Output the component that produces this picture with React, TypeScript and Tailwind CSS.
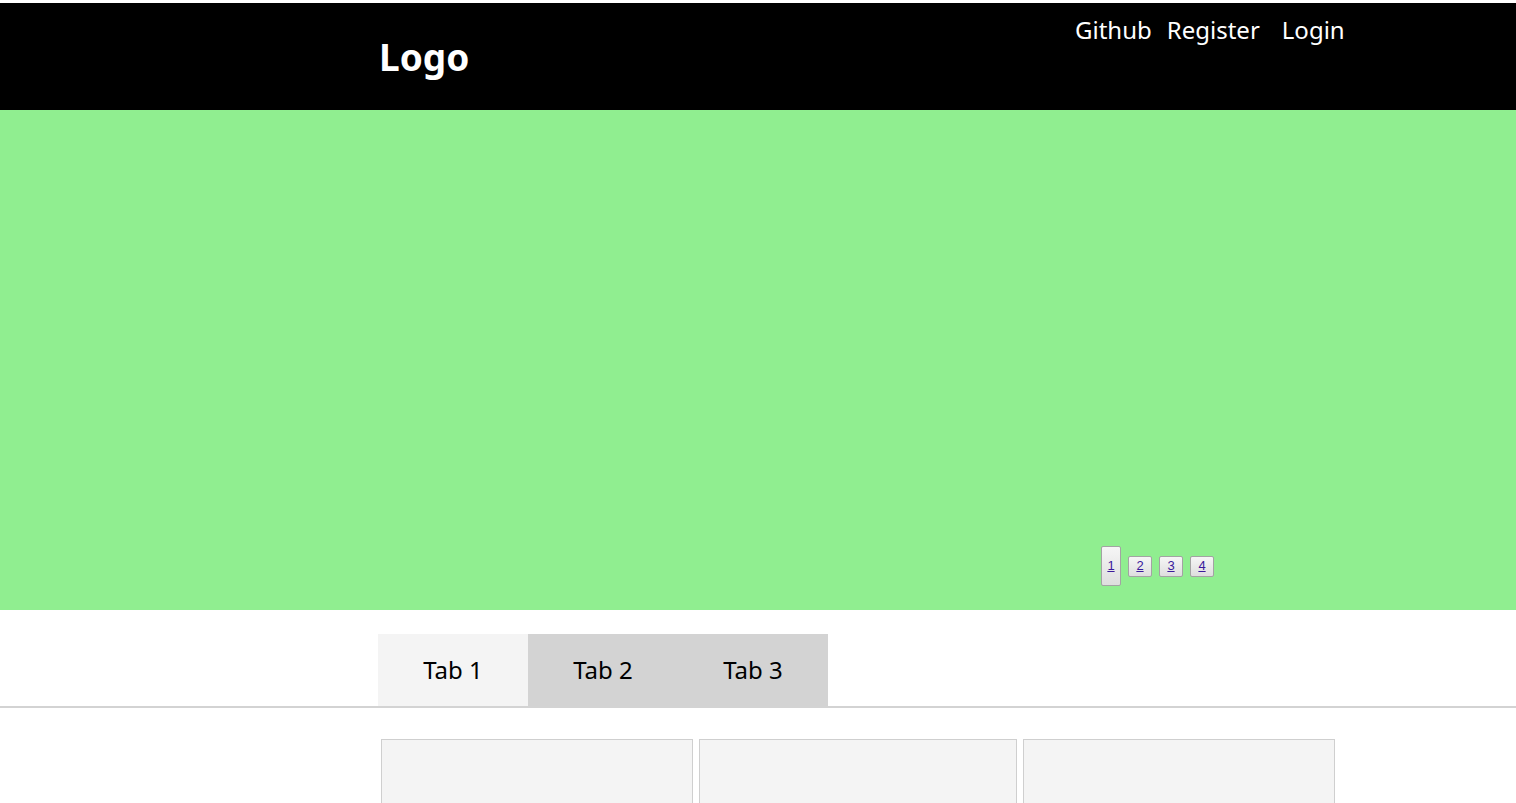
import React from 'react';

// TYPES
type Link = { title: string; href: string };

const NAV: Link[] = [
  { title: 'Github', href: '#' },
  { title: 'Register', href: '#' },
  { title: 'Login', href: '#' },
];

const TABS = ['Tab 1', 'Tab 2', 'Tab 3'];

// MARKUP
const Header = () => (
  <header className="mt-[3px] h-[107px] bg-black text-white">
    <div className="relative h-full">
      <h1 className="absolute left-[379px] top-[32px] text-[37px] font-bold leading-[44px]">
        Logo
      </h1>
      <nav className="absolute left-[1075px] top-[9px]">
        <ul className="flex flex-row text-[24px] leading-[36px]">
          {NAV.map((nav, i) => (
            <li
              key={nav.title}
              className={i === 1 ? 'ml-[15px]' : i === 2 ? 'ml-[22px]' : ''}
            >
              <a href={nav.href}>{nav.title}</a>
            </li>
          ))}
        </ul>
      </nav>
    </div>
  </header>
);

const Pager = () => (
  <div className="absolute left-[1101px] top-[436px] flex items-center gap-[7px]">
    {[1, 2, 3, 4].map((n) => (
      <button
        key={n}
        className={`flex items-center justify-center rounded-[2px] border border-[#a3a3a3] bg-gradient-to-b from-[#f6f6f6] to-[#dedede] text-[13px] text-[#3a1a9c] underline ${
          n === 1 ? 'h-[40px] w-[20px]' : 'h-[21px] w-[24px]'
        }`}
        style={{ fontFamily: '"Liberation Sans", Arial, sans-serif' }}
      >
        {n}
      </button>
    ))}
  </div>
);

const Banner = () => (
  <section className="relative h-[500px] bg-[#90ee90]">
    <Pager />
  </section>
);

const Tabs = () => (
  <div className="mt-[24px] border-b-2 border-[#d3d3d3]">
    <div className="ml-[378px] flex flex-row">
      {TABS.map((tab, i) => (
        <button
          key={tab}
          className={`flex h-[72px] w-[150px] items-center justify-center text-[24px] text-black ${
            i === 0 ? 'bg-[#f4f4f4]' : 'bg-[#d3d3d3]'
          }`}
        >
          {tab}
        </button>
      ))}
    </div>
  </div>
);

const Cards = () => (
  <div className="ml-[381px] mt-[31px] flex flex-row gap-[6px]">
    <div className="h-[120px] w-[312px] border border-[#cfcfcf] bg-[#f4f4f4]" />
    <div className="h-[120px] w-[318px] border border-[#cfcfcf] bg-[#f4f4f4]" />
    <div className="h-[120px] w-[312px] border border-[#cfcfcf] bg-[#f4f4f4]" />
  </div>
);

export default function App() {
  return (
    <div
      className="h-[803px] overflow-hidden bg-white"
      style={{ fontFamily: '"Noto Sans", "Open Sans", sans-serif' }}
    >
      <Header />
      <Banner />
      <Tabs />
      <Cards />
    </div>
  );
}
